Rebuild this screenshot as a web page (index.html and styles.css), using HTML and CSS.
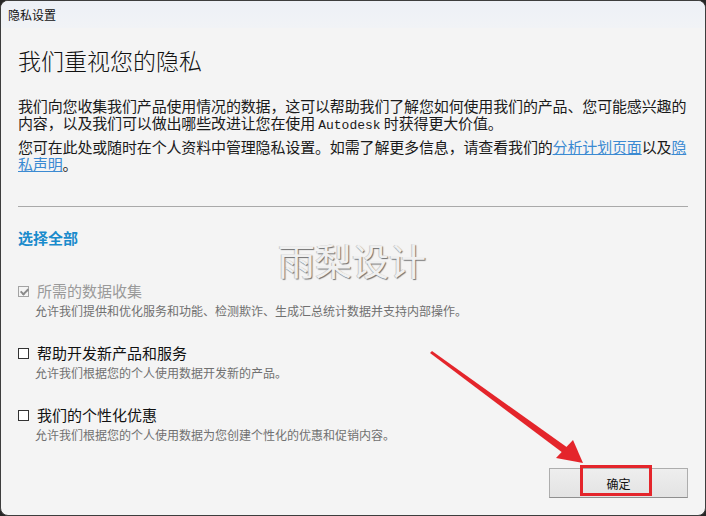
FILE: index.html
```html
<!DOCTYPE html>
<html lang="zh-CN">
<head>
  <meta charset="UTF-8">
  <title>隐私设置</title>
  <link rel="stylesheet" href="styles.css">
</head>
<body>
  <div class="window">
    <div class="title-bar">隐私设置</div>
    <div class="content">
      <h1>我们重视您的隐私</h1>
      <p class="intro">我们向您收集我们产品使用情况的数据，这可以帮助我们了解您如何使用我们的产品、您可能感兴趣的内容，以及我们可以做出哪些改进让您在使用 <span class="mono">Autodesk</span> 时获得更大价值。</p>
      <p class="intro second">您可在此处或随时在个人资料中管理隐私设置。如需了解更多信息，请查看我们的<a href="#">分析计划页面</a>以及<a href="#">隐私声明</a>。</p>
      <hr class="divider">
      <div class="select-all">选择全部</div>

      <div class="option disabled first">
        <label class="option-label"><span class="box checked"></span>所需的数据收集</label>
        <div class="option-desc">允许我们提供和优化服务和功能、检测欺诈、生成汇总统计数据并支持内部操作。</div>
      </div>
      <div class="option">
        <label class="option-label"><span class="box"></span>帮助开发新产品和服务</label>
        <div class="option-desc">允许我们根据您的个人使用数据开发新的产品。</div>
      </div>
      <div class="option">
        <label class="option-label"><span class="box"></span>我们的个性化优惠</label>
        <div class="option-desc">允许我们根据您的个人使用数据为您创建个性化的优惠和促销内容。</div>
      </div>

      <div class="footer">
        <button class="ok-btn">确定</button>
      </div>
    </div>

    <!-- watermark + red annotation drawn over the dialog -->
    <div class="watermark">雨梨设计</div>
    <svg class="annotations" width="706" height="516" viewBox="0 0 706 516">
      <polygon points="430,353 432,351 568,448 563,453" fill="#e4252b"/>
      <polygon points="583,463 556,458 573,440" fill="#e4252b"/>
      <rect x="581.5" y="466.5" width="69" height="28" fill="none" stroke="#e4252b" stroke-width="3"/>
    </svg>
  </div>
</body>
</html>
```

FILE: styles.css
```css
html, body {
  margin: 0;
  padding: 0;
  background-color: #262626;
}
body {
  font-family: "Noto Sans CJK SC", "Liberation Sans", sans-serif;
  color: #1a1a1a;
}
.window {
  position: relative;
  width: 706px;
  height: 516px;
  box-sizing: border-box;
  border: 1px solid #3d3d3d;
  border-radius: 8px;
  background-color: #f4f4f4;
  overflow: hidden;
}
.title-bar {
  height: 27px;
  line-height: 27px;
  padding-left: 7px;
  font-size: 12px;
  color: #111;
  background: linear-gradient(#edf0f6, #f1f3f6);
}
.content {
  padding: 0 17px;
}
h1 {
  margin: 20px 0 0;
  font-size: 23px;
  line-height: 24px;
  font-weight: 300;
  color: #111;
}
.intro {
  margin: 25px 0 0;
  font-size: 15px;
  line-height: 17px;
  letter-spacing: -0.15px;
}
.intro.second {
  margin-top: 4px;
}
.intro a {
  color: #3b8ad2;
  text-decoration: underline;
}
.mono {
  font-family: "Liberation Mono", monospace;
  font-size: 13px;
  letter-spacing: 0;
}
.divider {
  margin: 34px 0 0;
  border: none;
  border-top: 1px solid #a9a9a9;
  height: 0;
}
.select-all {
  margin-top: 21px;
  font-size: 15px;
  line-height: 20px;
  font-weight: bold;
  color: #1a8bcc;
}
.option {
  margin-top: 24px;
}
.option.first {
  margin-top: 33px;
}
.option-label {
  display: flex;
  align-items: center;
  gap: 8px;
  font-size: 15px;
  line-height: 20px;
  color: #111;
}
.option-desc {
  margin-top: 2px;
  padding-left: 17px;
  font-size: 12px;
  line-height: 16px;
  color: #707070;
}
.box {
  position: relative;
  width: 11px;
  height: 11px;
  box-sizing: border-box;
  border: 1px solid #333;
  background-color: #fff;
  flex: none;
}
.disabled .option-label {
  color: #9a9a9a;
}
.disabled .box {
  border-color: #a3a3a3;
  background-color: #f4f4f4;
}
.box.checked::after {
  content: "";
  position: absolute;
  left: 3px;
  top: 0px;
  width: 3px;
  height: 6px;
  border: solid #8a8a8a;
  border-width: 0 2px 2px 0;
  transform: rotate(45deg);
}
.footer {
  display: flex;
  justify-content: flex-end;
  margin-top: 25px;
}
.ok-btn {
  width: 139px;
  height: 30px;
  border: 1px solid #adadad;
  border-bottom-color: #8f8f8f;
  background: linear-gradient(#eeeeee, #e3e3e3);
  font-family: "Noto Sans CJK SC", sans-serif;
  font-size: 12px;
  color: #111;
  padding: 0;
}
.watermark {
  position: absolute;
  left: 277px;
  top: 236px;
  font-size: 37px;
  line-height: 46px;
  color: #f0f0f0;
  text-shadow: 1px 1px 1px #707070, -1px 0 0 #cccccc;
}
.annotations {
  position: absolute;
  left: -1px;
  top: -1px;
  pointer-events: none;
}
```
